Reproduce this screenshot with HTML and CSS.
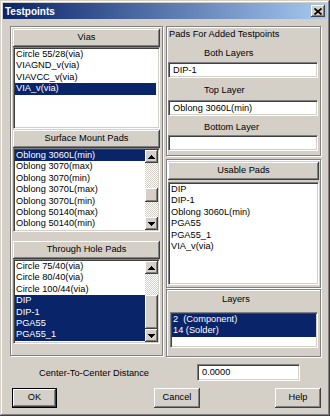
FILE: index.html
```html
<!DOCTYPE html>
<html lang="en">
<head>
  <meta charset="UTF-8">
  <title>Testpoints</title>
  <link rel="stylesheet" href="styles.css">
</head>
<body>

  <div class="window">
    <div class="titlebar">
      <span class="title">Testpoints</span>
      <span class="close-btn">
        <svg width="8" height="7" viewBox="0 0 8 7"><path d="M0.5 0.5 L7.5 6.5 M7.5 0.5 L0.5 6.5" stroke="#000" stroke-width="1.7"/></svg>
      </span>
    </div>

    <div class="panels">
      <div class="group left-group">
        <div class="head-btn">Vias</div>
        <div class="listbox vias-list">
          <div class="rows">
            <div class="row">Circle 55/28(via)</div>
            <div class="row">VIAGND_v(via)</div>
            <div class="row">VIAVCC_v(via)</div>
            <div class="row sel">VIA_v(via)</div>
          </div>
        </div>

        <div class="head-btn smp-head">Surface Mount Pads</div>
        <div class="listbox smp-list">
          <div class="rows">
            <div class="row sel">Oblong 3060L(min)</div>
            <div class="row">Oblong 3070(max)</div>
            <div class="row">Oblong 3070(min)</div>
            <div class="row">Oblong 3070L(max)</div>
            <div class="row">Oblong 3070L(min)</div>
            <div class="row">Oblong 50140(max)</div>
            <div class="row">Oblong 50140(min)</div>
          </div>
          <div class="scrollbar">
            <div class="sb-btn"><svg width="7" height="4" viewBox="0 0 7 4"><polygon points="0,4 3.5,0 7,4" fill="#000"/></svg></div>
            <div class="sb-track"><div class="sb-thumb smp-thumb"></div></div>
            <div class="sb-btn"><svg width="7" height="4" viewBox="0 0 7 4"><polygon points="0,0 3.5,4 7,0" fill="#000"/></svg></div>
          </div>
        </div>

        <div class="head-btn thp-head">Through Hole Pads</div>
        <div class="listbox thp-list">
          <div class="rows">
            <div class="row">Circle 75/40(via)</div>
            <div class="row">Circle 80/40(via)</div>
            <div class="row">Circle 100/44(via)</div>
            <div class="row sel">DIP</div>
            <div class="row sel">DIP-1</div>
            <div class="row sel">PGA55</div>
            <div class="row sel">PGA55_1</div>
          </div>
          <div class="scrollbar">
            <div class="sb-btn"><svg width="7" height="4" viewBox="0 0 7 4"><polygon points="0,4 3.5,0 7,4" fill="#000"/></svg></div>
            <div class="sb-track"><div class="sb-thumb thp-thumb"></div></div>
            <div class="sb-btn"><svg width="7" height="4" viewBox="0 0 7 4"><polygon points="0,0 3.5,4 7,0" fill="#000"/></svg></div>
          </div>
        </div>
      </div>

      <div class="right-col">
        <div class="group pads-group">
          <div class="group-title">Pads For Added Testpoints</div>
          <div class="field-label both-label">Both Layers</div>
          <div class="field both-field">DIP-1</div>
          <div class="field-label top-label">Top Layer</div>
          <div class="field top-field">Oblong 3060L(min)</div>
          <div class="field-label bottom-label">Bottom Layer</div>
          <div class="field bottom-field"></div>
        </div>

        <div class="group usable-group">
          <div class="head-btn">Usable Pads</div>
          <div class="listbox usable-list">
            <div class="rows">
              <div class="row">DIP</div>
              <div class="row">DIP-1</div>
              <div class="row">Oblong 3060L(min)</div>
              <div class="row">PGA55</div>
              <div class="row">PGA55_1</div>
              <div class="row">VIA_v(via)</div>
            </div>
          </div>
        </div>

        <div class="group layers-group">
          <div class="layers-label">Layers</div>
          <div class="listbox layers-list">
            <div class="rows">
              <div class="row sel">2&nbsp; (Component)</div>
              <div class="row sel">14 (Solder)</div>
            </div>
          </div>
        </div>
      </div>
    </div>

    <div class="distance-row">
      <span class="distance-label">Center-To-Center Distance</span>
      <div class="field distance-field">0.0000</div>
    </div>

    <div class="button-row">
      <div class="btn btn-default ok-btn">OK</div>
      <div class="btn cancel-btn">Cancel</div>
      <div class="btn help-btn">Help</div>
    </div>
  </div>

</body>
</html>
```

FILE: styles.css
```css
* {
  box-sizing: border-box;
}

body {
  margin: 0;
  padding: 0;
  background: #d4d0c8;
  font-family: 'Liberation Sans', Arial, sans-serif;
  font-size: 9.25px;
  color: #000;
}

.window {
  width: 330px;
  height: 416px;
  padding: 3px;
  background: #d4d0c8;
  box-shadow: inset -1px -1px #404040, inset 1px 1px #d4d0c8, inset -2px -2px #808080, inset 2px 2px #fff;
}

/* title bar */
.titlebar {
  height: 16px;
  display: flex;
  align-items: center;
  justify-content: space-between;
  padding: 0 2px;
  background: linear-gradient(90deg, #0a246a, #a6caf0);
}

.title {
  color: #fff;
  font-weight: bold;
  font-size: 10px;
}

.close-btn {
  width: 14px;
  height: 12px;
  display: flex;
  align-items: center;
  justify-content: center;
  background: #d4d0c8;
  box-shadow: inset -1px -1px #404040, inset 1px 1px #fff, inset -2px -2px #808080;
}

/* panels */
.panels {
  display: flex;
  gap: 3px;
  margin-top: 7px;
  padding-left: 7px;
}

.group {
  border: 1px solid #808080;
  box-shadow: inset 1px 1px #fff, 1px 1px #fff;
}

.left-group {
  width: 153px;
  height: 330px;
  padding: 2px;
}

.right-col {
  width: 155px;
  display: flex;
  flex-direction: column;
}

.head-btn {
  height: 18px;
  line-height: 17px;
  text-align: center;
  background: #d4d0c8;
  box-shadow: inset -1px -1px #404040, inset 1px 1px #fff, inset -2px -2px #808080;
}

.smp-head {
  margin-top: 1px;
}

.thp-head {
  margin-top: 9px;
}

/* list boxes */
.listbox {
  display: flex;
  background: #fff;
  border: 1px solid;
  border-color: #808080 #fff #fff #808080;
  box-shadow: inset 1px 1px #404040, inset -1px -1px #d4d0c8;
  padding: 1px;
  overflow: hidden;
}

.rows {
  flex: 1;
  min-width: 0;
}

.row {
  height: 11.4px;
  line-height: 11.4px;
  padding-left: 1px;
  white-space: nowrap;
}

.row.sel {
  background: #0a246a;
  color: #fff;
}

.vias-list {
  height: 82px;
}

.vias-list .row {
  margin-right: 2px;
}

.smp-list {
  height: 84px;
}

.thp-list {
  height: 85px;
}

.scrollbar {
  width: 13px;
  display: flex;
  flex-direction: column;
}

.sb-btn {
  height: 13px;
  display: flex;
  align-items: center;
  justify-content: center;
  background: #d4d0c8;
  box-shadow: inset -1px -1px #404040, inset 1px 1px #fff, inset -2px -2px #808080;
}

.sb-btn svg {
  shape-rendering: crispEdges;
}

.sb-track {
  flex: 1;
  background: repeating-conic-gradient(#fff 0 25%, #d4d0c8 0 50%) 0 0 / 2px 2px;
}

.sb-thumb {
  background: #d4d0c8;
  box-shadow: inset -1px -1px #404040, inset 1px 1px #fff, inset -2px -2px #808080;
}

.smp-thumb {
  margin-top: 25px;
  height: 14px;
}

.thp-thumb {
  margin-top: 21px;
  height: 34px;
}

/* right side groups */
.pads-group {
  height: 130px;
  padding: 1px;
}

.group-title {
  height: 13px;
  line-height: 13px;
  padding-left: 1px;
}

.field-label {
  height: 12px;
  line-height: 12px;
  padding-left: 36px;
}

.both-label {
  margin-top: 6px;
}

.top-label {
  margin-top: 6px;
}

.bottom-label {
  margin-top: 5px;
}

.field {
  height: 16px;
  line-height: 13px;
  padding: 1px 4px;
  background: #fff;
  border: 1px solid;
  border-color: #808080 #fff #fff #808080;
  box-shadow: inset 1px 1px #404040, inset -1px -1px #d4d0c8;
  white-space: nowrap;
}

.pads-group .field {
  width: 150px;
}

.both-field {
  margin-top: 3px;
}

.top-field {
  margin-top: 4px;
}

.bottom-field {
  margin-top: 2px;
}

.usable-group {
  margin-top: 3px;
  height: 129px;
  padding: 2px 1px;
}

.usable-list {
  margin-top: 2px;
  height: 103px;
}

.layers-group {
  margin-top: 1px;
  height: 68px;
  padding: 1px;
}

.layers-label {
  height: 14px;
  line-height: 14px;
  padding-left: 54px;
  margin-top: 1px;
}

.layers-list {
  margin: 6px 1px 0 2px;
  height: 36px;
}

/* bottom controls */
.distance-row {
  display: flex;
  align-items: center;
  margin-top: 7px;
  height: 17px;
}

.distance-label {
  width: 194px;
  padding-left: 36px;
}

.distance-field {
  width: 103px;
  height: 17px;
}

.button-row {
  display: flex;
  margin-top: 7px;
}

.btn {
  height: 20px;
  width: 46px;
  line-height: 19px;
  text-align: center;
  background: #d4d0c8;
  box-shadow: inset -1px -1px #404040, inset 1px 1px #fff, inset -2px -2px #808080;
}

.btn-default {
  border: 1px solid #000;
  line-height: 17px;
}

.ok-btn {
  width: 45px;
  margin-left: 9px;
}

.cancel-btn {
  margin-left: 97px;
}

.help-btn {
  margin-left: 75px;
}
```
